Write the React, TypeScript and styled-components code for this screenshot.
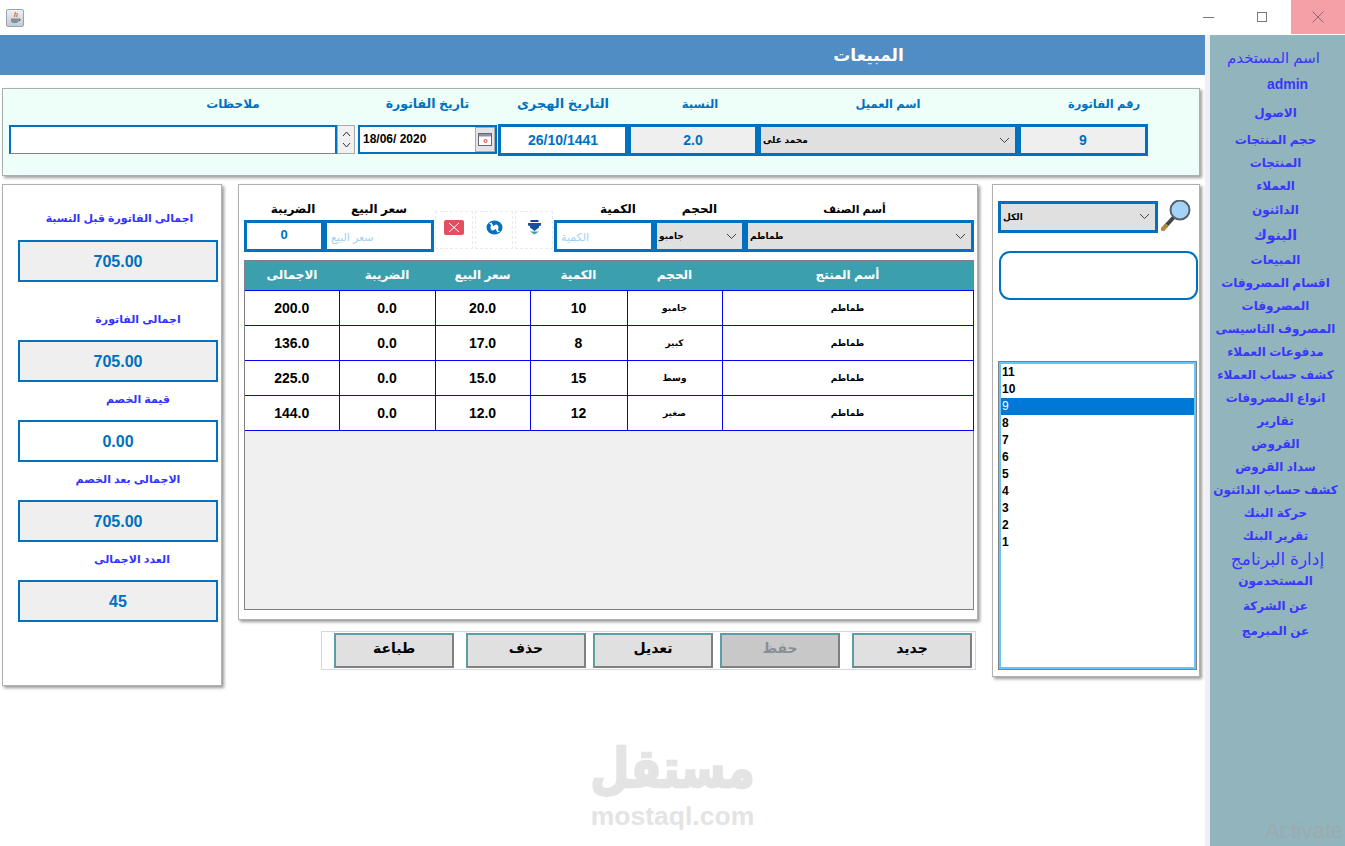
import React from 'react'
import styled, { createGlobalStyle } from 'styled-components'

const BLUE = '#0070c0'
const ARABIC = '"Liberation Sans", "DejaVu Sans", sans-serif'

const SIDE_ITEMS = [
  { text: 'اسم المستخدم', kind: 'user', mt: 0 },
  { text: 'admin', kind: 'admin', mt: 4 },
  { text: 'الاصول', mt: 6 },
  { text: 'حجم المنتجات', mt: 4 },
  { text: 'المنتجات', mt: 0 },
  { text: 'العملاء', mt: 0 },
  { text: 'الدائنون', mt: 1 },
  { text: 'البنوك', kind: 'big', mt: 2 },
  { text: 'المبيعات', mt: 2 },
  { text: 'اقسام المصروفات', mt: 0 },
  { text: 'المصروفات', mt: 0 },
  { text: 'المصروف التاسيسى', mt: 0 },
  { text: 'مدفوعات العملاء', mt: 0 },
  { text: 'كشف حساب العملاء', mt: 0 },
  { text: 'انواع المصروفات', mt: 0 },
  { text: 'تقارير', mt: 0 },
  { text: 'القروض', mt: 0 },
  { text: 'سداد القروض', mt: 0 },
  { text: 'كشف حساب الدائنون', mt: 0 },
  { text: 'حركة البنك', mt: 0 },
  { text: 'تقرير البنك', mt: 0 },
  { text: 'إدارة البرنامج', kind: 'huge', mt: 0 },
  { text: 'المستخدمون', mt: -1 },
  { text: 'عن الشركة', mt: 2 },
  { text: 'عن المبرمج', mt: 2 },
]

const ROWS = [
  ['200.0', '0.0', '20.0', '10', 'جامبو', 'طماطم'],
  ['136.0', '0.0', '17.0', '8', 'كبير', 'طماطم'],
  ['225.0', '0.0', '15.0', '15', 'وسط', 'طماطم'],
  ['144.0', '0.0', '12.0', '12', 'صغير', 'طماطم'],
]

const HEADERS = ['الاجمالى', 'الضريبة', 'سعر البيع', 'الكمية', 'الحجم', 'أسم المنتج']
const COLS = [94, 96, 95, 97, 95, 251]
const INVOICES = ['11', '10', '9', '8', '7', '6', '5', '4', '3', '2', '1']

const STATS = [
  { label: 'اجمالى الفاتورة قبل النسبة', value: '705.00', pl: 3, mt: 23, gap: 12, white: false },
  { label: 'اجمالى الفاتورة', value: '705.00', pl: 40, mt: 27, gap: 11, white: false },
  { label: 'قيمة الخصم', value: '0.00', pl: 40, mt: 7, gap: 11, white: true },
  { label: 'الاجمالى بعد الخصم', value: '705.00', pl: 20, mt: 7, gap: 11, white: false },
  { label: 'العدد الاجمالى', value: '45', pl: 28, mt: 7, gap: 11, white: false },
]

const Chevron = () => (
  <svg width="11" height="7" viewBox="0 0 11 7">
    <path d="M1 1l4.500 4.500L10 1" fill="none" stroke="#444" strokeWidth="1" />
  </svg>
)

const App = () => {
  return (
    <>
      <GlobalStyle />
      <Page>
        <TitleBar>
          <JavaIcon>
            <svg width="14" height="14" viewBox="0 0 14 14">
              <path d="M7 1c1.500 2-1.500 3 0 5M9 2c1 1.500-1 2.500 0 4" fill="none" stroke="#d9661f" strokeWidth="1.100" />
              <path d="M3 7.500h7.500v2.500c0 1.500-1.500 2-3.700 2S3 11.500 3 10z" fill="#7d8fa3" />
              <path d="M10.500 8h1.500v1.500h-1.500" fill="none" stroke="#5a6b80" />
            </svg>
          </JavaIcon>
          <WindowButtons>
            <WindowButton>
              <svg width="11" height="11" viewBox="0 0 11 11">
                <path d="M0 5.500h11" stroke="#777" />
              </svg>
            </WindowButton>
            <WindowButton>
              <svg width="10" height="10" viewBox="0 0 10 10">
                <rect x="0.500" y="0.500" width="9" height="9" fill="none" stroke="#777" />
              </svg>
            </WindowButton>
            <CloseButton>
              <svg width="12" height="12" viewBox="0 0 12 12">
                <path d="M0.500 0.500l11 11M11.500 0.500l-11 11" stroke="#8a6a6e" />
              </svg>
            </CloseButton>
          </WindowButtons>
        </TitleBar>

        <Body>
          <Content>
            <Header>المبيعات</Header>

            <InvoicePanel>
              <NotesColumn>
                <TopLabel $pl={102} $fs={12}>ملاحظات</TopLabel>
                <NotesRow>
                  <NotesBox />
                  <Spinner>
                    <svg width="9" height="6" viewBox="0 0 9 6">
                      <path d="M1 5l3.500-4L8 5" fill="none" stroke="#333" />
                    </svg>
                    <svg width="9" height="6" viewBox="0 0 9 6">
                      <path d="M1 1l3.500 4L8 1" fill="none" stroke="#333" />
                    </svg>
                  </Spinner>
                </NotesRow>
              </NotesColumn>
              <TopColumn $w={139} $ml={3}>
                <TopLabel $fs={12.500}>تاريخ الفاتورة</TopLabel>
                <DateBox>
                  <DateText>18/06/ 2020</DateText>
                  <CalendarButton>
                    <svg width="14" height="13" viewBox="0 0 14 13">
                      <rect x="0.500" y="0.500" width="13" height="12" fill="#fff" stroke="#667" />
                      <rect x="1" y="1" width="12" height="2.500" fill="#8a94a6" />
                      <circle cx="7.500" cy="8" r="1.500" fill="none" stroke="#d33" />
                    </svg>
                  </CalendarButton>
                </DateBox>
              </TopColumn>
              <TopColumn $w={130} $ml={1}>
                <TopLabel $fs={13}>التاريخ الهجرى</TopLabel>
                <ValueField>26/10/1441</ValueField>
              </TopColumn>
              <TopColumn $w={130}>
                <TopLabel $pl={14} $fs={11.500}>النسبة</TopLabel>
                <ValueField $grey>2.0</ValueField>
              </TopColumn>
              <TopColumn $w={260}>
                <TopLabel $fs={11.500}>اسم العميل</TopLabel>
                <Combo $h={32}>
                  <ComboText>محمد على</ComboText>
                  <Chevron />
                </Combo>
              </TopColumn>
              <TopColumn $w={130}>
                <TopLabel $pl={42} $fs={11.500}>رقم الفاتورة</TopLabel>
                <ValueField $grey>9</ValueField>
              </TopColumn>
            </InvoicePanel>

            <MainRow>
              <TotalsPanel>
                {STATS.map((s) => (
                  <StatGroup key={s.label} $mt={s.mt}>
                    <StatLabel $pl={s.pl} $gap={s.gap}>{s.label}</StatLabel>
                    <StatBox $white={s.white}>{s.value}</StatBox>
                  </StatGroup>
                ))}
              </TotalsPanel>

              <CenterColumn>
                <ItemsPanel>
                  <EntryRow>
                    <EntryColumn $w={80}>
                      <EntryLabel $pl={18}>الضريبة</EntryLabel>
                      <EntryValue>0</EntryValue>
                    </EntryColumn>
                    <EntryColumn $w={110}>
                      <EntryLabel>سعر البيع</EntryLabel>
                      <EntryInput>سعر البيع</EntryInput>
                    </EntryColumn>
                    <IconButtons>
                      <IconButton>
                        <svg width="20" height="15" viewBox="0 0 20 15">
                          <rect width="20" height="15" rx="2" fill="#e05060" />
                          <path d="M5 3l10 9M15 3L5 12" stroke="#fff" />
                        </svg>
                      </IconButton>
                      <IconButton>
                        <svg width="17" height="15" viewBox="0 0 17 15">
                          <path
                            fillRule="evenodd"
                            d="M8.500 0.500a8 7 0 1 0 0 14 8 7 0 1 0 0-14zM8.500 4a4 3.500 0 1 1 0 7 4 3.500 0 1 1 0-7z"
                            fill={BLUE}
                          />
                          <path d="M7 1l4 3-4 2zM10 14l-4-3 4-2z" fill={BLUE} />
                          <path d="M3 3.500l3-1v3zM14 11.500l-3 1v-3z" fill="#fff" />
                        </svg>
                      </IconButton>
                      <IconButton>
                        <svg width="13" height="15" viewBox="0 0 13 15">
                          <path d="M2.500 0h8v2h-8z" fill="#14408c" />
                          <path d="M0 3h13v2.500l-2 .5v1.500L6.500 11 2 7.500V6l-2-.5z" fill="#1a4fa0" />
                          <path d="M2 11.500h9l-4.500 3z" fill="#3b9fad" />
                        </svg>
                      </IconButton>
                    </IconButtons>
                    <EntryColumn $w={100}>
                      <EntryLabel $pl={28}>الكمية</EntryLabel>
                      <EntryInput>الكمية</EntryInput>
                    </EntryColumn>
                    <EntryColumn $w={91}>
                      <EntryLabel>الحجم</EntryLabel>
                      <Combo $h={32}>
                        <ComboText>جامبو</ComboText>
                        <Chevron />
                      </Combo>
                    </EntryColumn>
                    <EntryColumn $w={229}>
                      <EntryLabel $pr={10} $fs={11}>أسم الصنف</EntryLabel>
                      <Combo $h={32}>
                        <ComboText>طماطم</ComboText>
                        <Chevron />
                      </Combo>
                    </EntryColumn>
                  </EntryRow>

                  <TableFrame>
                    <ItemsTable>
                      <colgroup>
                        {COLS.map((w, i) => (
                          <col key={i} width={w} />
                        ))}
                      </colgroup>
                      <thead>
                        <tr>
                          {HEADERS.map((h) => (
                            <HeadCell key={h}>{h}</HeadCell>
                          ))}
                        </tr>
                      </thead>
                      <tbody>
                        {ROWS.map((row, r) => (
                          <tr key={r}>
                            {row.map((cell, c) => (
                              <BodyCell key={c} $small={c > 3}>{cell}</BodyCell>
                            ))}
                          </tr>
                        ))}
                      </tbody>
                    </ItemsTable>
                  </TableFrame>
                </ItemsPanel>

                <ActionBar>
                  <ActionButton $mr={12}>طباعة</ActionButton>
                  <ActionButton $mr={7}>حذف</ActionButton>
                  <ActionButton $mr={7}>تعديل</ActionButton>
                  <ActionButton $mr={12} $disabled>حفظ</ActionButton>
                  <ActionButton>جديد</ActionButton>
                </ActionBar>
              </CenterColumn>

              <SearchPanel>
                <SearchRow>
                  <Combo $h={32} $w={160}>
                    <ComboText>الكل</ComboText>
                    <Chevron />
                  </Combo>
                  <svg width="33" height="33" viewBox="0 0 33 33">
                    <path d="M15 17L4 29" stroke="#444" strokeWidth="4" strokeLinecap="round" />
                    <path d="M4 29l3-3" stroke="#b08a40" strokeWidth="4" strokeLinecap="round" />
                    <circle cx="21" cy="10" r="9.500" fill="#a5d3f5" stroke="#55606a" strokeWidth="2" />
                  </svg>
                </SearchRow>
                <SearchBox />
                <InvoiceList>
                  {INVOICES.map((n) => (
                    <InvoiceItem key={n} $selected={n === '9'}>{n}</InvoiceItem>
                  ))}
                </InvoiceList>
              </SearchPanel>
            </MainRow>

            <Watermark>
              <WatermarkLogo>مستقل</WatermarkLogo>
              <WatermarkUrl>mostaql.com</WatermarkUrl>
            </Watermark>
          </Content>

          <Sidebar>
            {SIDE_ITEMS.map((item) => (
              <SideItem key={item.text} $kind={item.kind} $mt={item.mt}>{item.text}</SideItem>
            ))}
          </Sidebar>
        </Body>
        <ActivateText>Activate</ActivateText>
      </Page>
    </>
  )
}

export default App

const GlobalStyle = createGlobalStyle`
  html, body {
    margin: 0;
    padding: 0;
    background: #fff;
  }
  * {
    box-sizing: border-box;
  }
`

const Page = styled.div`
  position: relative;
  width: 1345px;
  height: 846px;
  overflow: hidden;
  font-family: ${ARABIC};
`

const TitleBar = styled.div`
  display: flex;
  align-items: flex-start;
  justify-content: space-between;
  height: 35px;
  background: #fff;
`

const JavaIcon = styled.div`
  display: flex;
  align-items: center;
  justify-content: center;
  width: 18px;
  height: 18px;
  margin: 9px 0 0 6px;
  background: linear-gradient(#eef1f4, #c3cad2);
  border: 1px solid #9aa3ad;
  border-radius: 2px;
`

const WindowButtons = styled.div`
  display: flex;
`

const WindowButton = styled.div`
  display: flex;
  align-items: center;
  justify-content: center;
  width: 54px;
  height: 34px;
`

const CloseButton = styled(WindowButton)`
  margin-left: 2px;
  background: #f4a0a6;
`

const Body = styled.div`
  display: flex;
  height: 811px;
`

const Content = styled.div`
  position: relative;
  width: 1205px;
`

const Header = styled.div`
  height: 40px;
  padding-left: 532px;
  background: #508dc5;
  color: #fff;
  font-size: 17px;
  font-weight: 700;
  line-height: 42px;
  text-align: center;
`

const InvoicePanel = styled.div`
  display: flex;
  width: 1198px;
  height: 88px;
  margin: 13px 0 0 2px;
  padding: 5px 0 0 6px;
  background: #eefffa;
  border: 1px solid #a8b0ae;
  box-shadow: 2px 2px 3px #a0a0a0;
`

const TopColumn = styled.div<{ $w: number; $ml?: number }>`
  display: flex;
  flex-direction: column;
  width: ${(p) => p.$w}px;
  margin-left: ${(p) => p.$ml || 0}px;
`

const NotesColumn = styled.div`
  display: flex;
  flex-direction: column;
  width: 346px;
`

const TopLabel = styled.div<{ $pl?: number; $fs: number }>`
  height: 30px;
  padding-left: ${(p) => p.$pl || 0}px;
  color: ${BLUE};
  font-size: ${(p) => p.$fs}px;
  font-weight: 700;
  line-height: 20px;
  text-align: center;
`

const NotesRow = styled.div`
  display: flex;
  height: 29px;
  margin-top: 1px;
`

const NotesBox = styled.div`
  flex: 1;
  background: #fff;
  border: 1px solid #808080;
  border-top: 2px solid ${BLUE};
  border-left: 2px solid ${BLUE};
  border-right: 2px solid ${BLUE};
`

const Spinner = styled.div`
  display: flex;
  flex-direction: column;
  align-items: center;
  justify-content: space-evenly;
  width: 18px;
  background: #f0f0f0;
  border: 1px solid #aaa;
`

const DateBox = styled.div`
  display: flex;
  height: 29px;
  margin-top: 1px;
  background: #fff;
  border: 2px solid ${BLUE};
`

const DateText = styled.div`
  flex: 1;
  padding-left: 3px;
  color: #000;
  font-size: 12px;
  font-weight: 700;
  line-height: 25px;
`

const CalendarButton = styled.div`
  display: flex;
  align-items: center;
  justify-content: center;
  width: 20px;
  background: #e4e4e4;
  border: 1px solid #aaa;
`

const ValueField = styled.div<{ $grey?: boolean }>`
  height: 32px;
  background: ${(p) => (p.$grey ? '#efefef' : '#fff')};
  border: 3px solid ${BLUE};
  color: ${BLUE};
  font-size: 14px;
  font-weight: 700;
  line-height: 26px;
  text-align: center;
`

const Combo = styled.div<{ $h: number; $w?: number }>`
  display: flex;
  align-items: center;
  justify-content: space-between;
  flex: none;
  width: ${(p) => (p.$w ? `${p.$w}px` : 'auto')};
  height: ${(p) => p.$h}px;
  padding: 0 5px 0 2px;
  background: #e0e0e0;
  border: 3px solid ${BLUE};
`

const ComboText = styled.span`
  color: #000;
  font-size: 9px;
  font-weight: 700;
`

const MainRow = styled.div`
  display: flex;
  align-items: flex-start;
  margin: 8px 0 0 2px;
`

const Panel = styled.div`
  background: #fff;
  border: 1px solid #b0b0b0;
  box-shadow: 2px 2px 3px #999;
`

const TotalsPanel = styled(Panel)`
  width: 220px;
  height: 502px;
  padding-left: 15px;
`

const StatGroup = styled.div<{ $mt: number }>`
  margin-top: ${(p) => p.$mt}px;
`

const StatLabel = styled.div<{ $pl: number; $gap: number }>`
  width: 200px;
  height: 20px;
  margin-bottom: ${(p) => p.$gap}px;
  padding-left: ${(p) => p.$pl}px;
  color: #3333ff;
  font-size: 11px;
  font-weight: 700;
  line-height: 20px;
  text-align: center;
`

const StatBox = styled.div<{ $white: boolean }>`
  width: 200px;
  height: 42px;
  background: ${(p) => (p.$white ? '#fff' : '#efefef')};
  border: 2px solid ${BLUE};
  color: ${BLUE};
  font-size: 16px;
  font-weight: 700;
  line-height: 40px;
  text-align: center;
`

const CenterColumn = styled.div`
  display: flex;
  flex-direction: column;
  align-items: flex-end;
  width: 740px;
  margin-left: 16px;
`

const ItemsPanel = styled(Panel)`
  width: 740px;
  height: 436px;
  padding: 10px 3px 0 5px;
`

const EntryRow = styled.div`
  display: flex;
  align-items: flex-end;
  height: 57px;
`

const EntryColumn = styled.div<{ $w: number }>`
  display: flex;
  flex: none;
  flex-direction: column;
  width: ${(p) => p.$w}px;
`

const EntryLabel = styled.div<{ $pl?: number; $pr?: number; $fs?: number }>`
  height: 25px;
  padding: 6px ${(p) => p.$pr || 0}px 0 ${(p) => p.$pl || 0}px;
  color: #000;
  font-size: ${(p) => p.$fs || 12}px;
  font-weight: 700;
  line-height: 16px;
  text-align: center;
`

const EntryValue = styled.div`
  height: 32px;
  background: #fff;
  border: 3px solid ${BLUE};
  color: ${BLUE};
  font-size: 13px;
  font-weight: 700;
  line-height: 23px;
  text-align: center;
`

const EntryInput = styled.div`
  height: 32px;
  padding-left: 4px;
  background: #fff;
  border: 3px solid ${BLUE};
  color: #a0d4f0;
  font-size: 11px;
  line-height: 29px;
`

const IconButtons = styled.div`
  display: flex;
  flex: none;
  gap: 2px;
  width: 118px;
  margin: 0 1px 3px 1px;
`

const IconButton = styled.div`
  display: flex;
  align-items: flex-start;
  justify-content: center;
  width: 38px;
  height: 38px;
  padding-top: 8px;
  border: 1px dashed #eaeaea;
`

const TableFrame = styled.div`
  width: 730px;
  height: 350px;
  margin-top: 8px;
  background: #f0f0f0;
  border: 1px solid #808080;
`

const ItemsTable = styled.table`
  width: 728px;
  table-layout: fixed;
  border-collapse: collapse;
`

const HeadCell = styled.th`
  height: 29px;
  padding: 0;
  background: #3b9fad;
  color: #fff;
  font-size: 12px;
  font-weight: 700;
`

const BodyCell = styled.td<{ $small: boolean }>`
  height: 35px;
  padding: 0;
  background: #fff;
  border: 1px solid #0000ff;
  color: #000;
  font-size: ${(p) => (p.$small ? '9px' : '14px')};
  font-weight: 700;
  text-align: center;

  &:first-child {
    border-left: 0;
  }
`

const ActionBar = styled.div`
  display: flex;
  align-items: center;
  width: 655px;
  height: 39px;
  margin: 11px 2px 0 0;
  padding: 0 3px 0 12px;
  background: #fff;
  border: 1px solid #d0d6f4;
`

const ActionButton = styled.div<{ $mr?: number; $disabled?: boolean }>`
  flex: none;
  width: 120px;
  height: 35px;
  margin-right: ${(p) => p.$mr || 0}px;
  background: ${(p) => (p.$disabled ? '#c8c8c8' : '#e0e0e0')};
  border: 2px solid #5c9ea4;
  border-bottom-color: #808080;
  border-right-color: #808080;
  color: ${(p) => (p.$disabled ? '#8a8f98' : '#000')};
  font-size: 14px;
  font-weight: 700;
  line-height: 27px;
  text-align: center;
`

const SearchPanel = styled(Panel)`
  display: flex;
  flex-direction: column;
  width: 208px;
  height: 493px;
  margin-left: 14px;
  padding: 15px 2px 0 5px;
`

const SearchRow = styled.div`
  display: flex;
  align-items: center;
  gap: 1px;
  height: 33px;
`

const SearchBox = styled.div`
  width: 199px;
  height: 49px;
  margin: 18px 0 0 1px;
  background: #fff;
  border: 2px solid ${BLUE};
  border-radius: 11px;
`

const InvoiceList = styled.div`
  width: 199px;
  height: 309px;
  margin-top: 61px;
  background: #fff;
  border: 3px solid #66c4ff;
  outline: 1px solid #808080;
  outline-offset: -1px;
`

const InvoiceItem = styled.div<{ $selected: boolean }>`
  height: 17px;
  padding-left: 1px;
  background: ${(p) => (p.$selected ? '#0078d7' : 'transparent')};
  color: ${(p) => (p.$selected ? '#fff' : '#000')};
  font-size: 12px;
  font-weight: ${(p) => (p.$selected ? 400 : 700)};
  line-height: 17px;
`

const Watermark = styled.div`
  position: absolute;
  top: 712px;
  left: 560px;
  width: 225px;
  text-align: center;
`

const WatermarkLogo = styled.div`
  color: #e4e4e4;
  font-family: "DejaVu Sans", sans-serif;
  font-size: 45px;
  font-weight: 700;
  line-height: 44px;
  -webkit-text-stroke: 2px #e4e4e4;
  transform: scaleY(1.2);
`

const WatermarkUrl = styled.div`
  margin-top: 13px;
  color: #e4e4e4;
  font-size: 26.500px;
  font-weight: 700;
  line-height: 24px;
`

const Sidebar = styled.div`
  display: flex;
  flex-direction: column;
  width: 135px;
  margin-left: 5px;
  padding-top: 11px;
  background: #92b4bc;
  box-shadow: -5px 0 0 #efeff5;
`

const sideFont = { huge: 17, big: 14, admin: 14, user: 15 }
const sidePad = { user: '0 8px 0 0', admin: '0 0 0 20px', huge: '0' }

const SideItem = styled.div<{ $kind?: string; $mt: number }>`
  height: 23px;
  margin-top: ${(p) => p.$mt}px;
  padding: ${(p) => sidePad[p.$kind as keyof typeof sidePad] || '0 4px 0 0'};
  color: #3a36ff;
  font-size: ${(p) => sideFont[p.$kind as keyof typeof sideFont] || 12}px;
  font-weight: ${(p) => (p.$kind === 'user' || p.$kind === 'huge' ? 400 : 700)};
  line-height: 23px;
  white-space: nowrap;
  text-align: center;
`

const ActivateText = styled.div`
  position: absolute;
  left: 1265px;
  bottom: 2px;
  color: #9aabb0;
  font-size: 22px;
  white-space: nowrap;
`
